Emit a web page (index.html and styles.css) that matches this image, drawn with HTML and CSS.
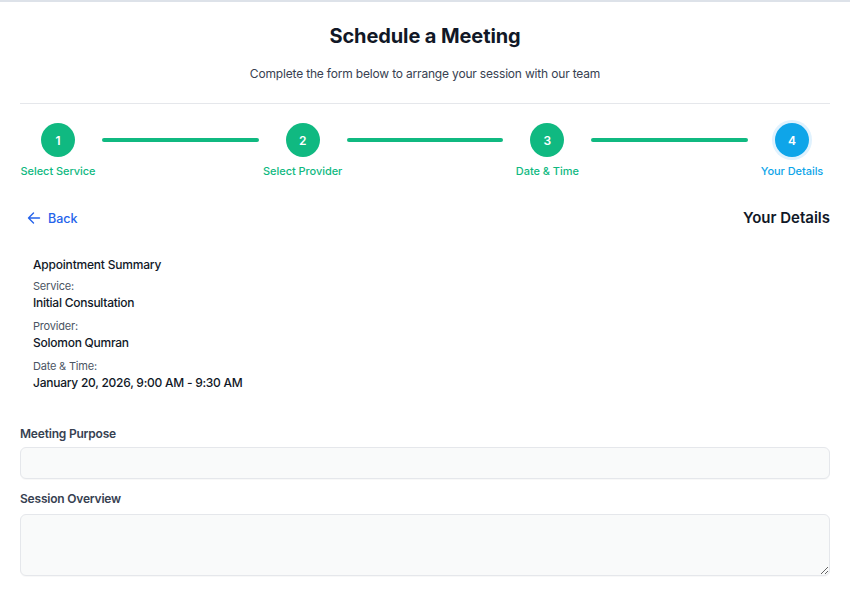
FILE: index.html
```html
<!DOCTYPE html>
<html lang="en">
<head>
<meta charset="utf-8">
<title>Schedule a Meeting</title>
<link rel="stylesheet" href="styles.css">
</head>
<body>
<div class="page">
  <header class="header">
    <h1 class="title">Schedule a Meeting</h1>
    <p class="subtitle">Complete the form below to arrange your session with our team</p>
  </header>

  <div class="stepper">
    <div class="step done"><div class="circle">1</div><div class="step-label">Select Service</div></div>
    <div class="connector"></div>
    <div class="step done"><div class="circle">2</div><div class="step-label">Select Provider</div></div>
    <div class="connector"></div>
    <div class="step done"><div class="circle">3</div><div class="step-label">Date &amp; Time</div></div>
    <div class="connector"></div>
    <div class="step current"><div class="circle">4</div><div class="step-label">Your Details</div></div>
  </div>

  <div class="nav-row">
    <a class="back" href="#">
      <svg class="back-icon" width="14" height="14" viewBox="0 0 14 14" fill="none" stroke="currentColor" stroke-width="1.4" stroke-linecap="round" stroke-linejoin="round"><path d="M12.5 7H1.5M6.5 2L1.5 7l5 5"/></svg>
      <span>Back</span>
    </a>
    <h2 class="section-title">Your Details</h2>
  </div>

  <div class="summary">
    <div class="summary-title">Appointment Summary</div>
    <div class="field-label">Service:</div>
    <div class="field-value">Initial Consultation</div>
    <div class="field-label gap">Provider:</div>
    <div class="field-value">Solomon Qumran</div>
    <div class="field-label gap">Date &amp; Time:</div>
    <div class="field-value">January 20, 2026, 9:00 AM - 9:30 AM</div>
  </div>

  <form class="form">
    <label class="form-label first" for="purpose">Meeting Purpose</label>
    <input class="input" id="purpose" type="text">
    <label class="form-label" for="overview">Session Overview</label>
    <textarea class="textarea" id="overview"></textarea>
  </form>
</div>
</body>
</html>
```

FILE: styles.css
```css
* { box-sizing: border-box; }

html, body { height: 100%; }

body {
  margin: 0;
  border-top: 2px solid #dde2e9;
  background: #ffffff;
  font-family: Inter, "Noto Sans", "Liberation Sans", sans-serif;
  color: #111827;
  overflow: hidden;
}

.page {
  padding: 0 20px;
}

.header {
  padding-top: 20px;
  padding-bottom: 19px;
  border-bottom: 1px solid #e5e7eb;
  text-align: center;
}

.title {
  margin: 0;
  font-size: 20px;
  line-height: 28px;
  font-weight: 700;
  color: #111827;
  letter-spacing: -0.1px;
}

.subtitle {
  margin: 14px 0 0;
  font-size: 12px;
  line-height: 20px;
  letter-spacing: -0.18px;
  color: #374151;
}

.stepper {
  display: flex;
  align-items: flex-start;
  padding-top: 19px;
}

.step {
  width: 76px;
  flex: none;
  display: flex;
  flex-direction: column;
  align-items: center;
}

.circle {
  width: 34px;
  height: 34px;
  border-radius: 50%;
  display: flex;
  align-items: center;
  justify-content: center;
  font-size: 12px;
  font-weight: 600;
  color: #ffffff;
  background: #10b981;
}

.step.current .circle {
  background: #0ea5e9;
  box-shadow: 0 0 0 3px #e0f2fe;
}

.step-label {
  margin-top: 6px;
  font-size: 11px;
  line-height: 16px;
  font-weight: 500;
  letter-spacing: -0.05px;
  white-space: nowrap;
  color: #10b981;
}

.step.current .step-label { color: #0ea5e9; }

.connector {
  flex: 1;
  height: 4px;
  margin: 15px 6px 0;
  border-radius: 2px;
  background: #10b981;
}

.nav-row {
  display: flex;
  align-items: center;
  justify-content: space-between;
  height: 24px;
  margin-top: 27px;
}

.back {
  display: flex;
  align-items: center;
  gap: 7px;
  margin-left: 7px;
  font-size: 12.5px;
  font-weight: 500;
  color: #2563eb;
  text-decoration: none;
}

.back-icon { display: block; }

.section-title {
  margin: 0;
  font-size: 15px;
  line-height: 24px;
  font-weight: 600;
  color: #111827;
}

.summary {
  margin-top: 13px;
  padding: 13px;
}

.summary-title {
  font-size: 12px;
  line-height: 18px;
  font-weight: 500;
  letter-spacing: -0.2px;
  color: #111827;
}

.field-label {
  margin-top: 4px;
  font-size: 11px;
  line-height: 16px;
  letter-spacing: -0.2px;
  color: #4b5563;
}

.field-label.gap { margin-top: 6px; }

.field-value {
  font-size: 12px;
  line-height: 18px;
  font-weight: 500;
  letter-spacing: -0.25px;
  color: #111827;
}

.form {
  display: flex;
  flex-direction: column;
}

.form-label {
  margin-top: 11px;
  font-size: 12px;
  line-height: 18px;
  font-weight: 600;
  letter-spacing: -0.2px;
  color: #374151;
}

.form-label.first { margin-top: 20px; }

.input,
.textarea {
  display: block;
  width: 100%;
  border: 1px solid #e5e7eb;
  border-radius: 6px;
  background: #f9fafa;
  font-family: inherit;
  font-size: 13px;
  box-shadow: 0 1px 1px rgba(0, 0, 0, 0.03);
}

.input {
  margin-top: 4px;
  height: 32px;
}

.textarea {
  margin-top: 6px;
  height: 62px;
  resize: vertical;
}
```
